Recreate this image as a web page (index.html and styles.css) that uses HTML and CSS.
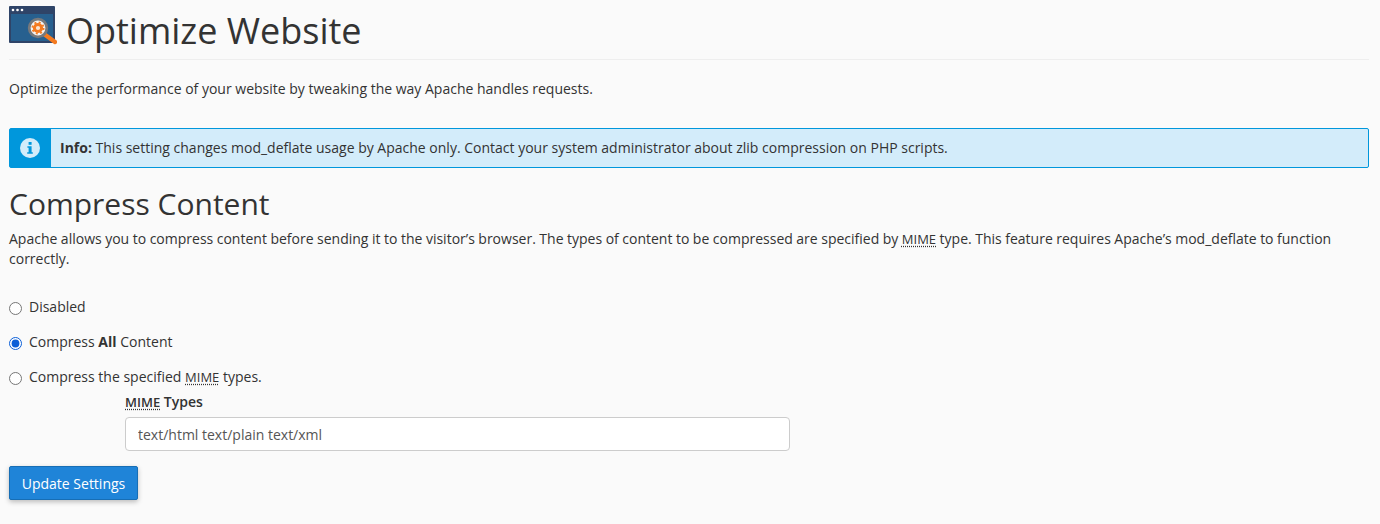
FILE: index.html
```html
<!DOCTYPE html>
<html lang="en">
<head>
    <meta charset="UTF-8">
    <title>Optimize Website</title>
    <link rel="stylesheet" href="styles.css">
</head>
<body>
    <div class="page-header">
        <svg class="page-icon" width="48" height="39" viewBox="0 0 48 39">
            <rect x="0" y="0" width="46" height="37" rx="1" fill="#2f4468"/>
            <rect x="2" y="8" width="42" height="27" fill="#27608f"/>
            <circle cx="4" cy="4" r="1.3" fill="#fff"/>
            <circle cx="8.5" cy="4" r="1.3" fill="#fff"/>
            <circle cx="13" cy="4" r="1.3" fill="#fff"/>
            <line x1="35" y1="28" x2="46" y2="36" stroke="#f47a20" stroke-width="4.4" stroke-linecap="round"/>
            <circle cx="29" cy="22" r="8.8" fill="#f4f4f4" stroke="#77797c" stroke-width="2.8"/>
            <circle cx="29" cy="22" r="3.6" fill="#fbe3d0" stroke="#f47a20" stroke-width="3"/>
            <circle cx="29" cy="22" r="5.6" fill="none" stroke="#f47a20" stroke-width="1.8" stroke-dasharray="2 2.4"/>
        </svg>
        <h1>Optimize Website</h1>
    </div>

    <p class="intro">Optimize the performance of your website by tweaking the way Apache handles requests.</p>

    <div class="alert">
        <div class="alert-icon">
            <svg width="20" height="20" viewBox="0 0 20 20">
                <circle cx="10" cy="10" r="10" fill="#d3ecfa"/>
                <rect x="8.6" y="4" width="3" height="2.8" fill="#0097dc"/>
                <path d="M7.4 8.2h4.2v6h1.2v1.6H7.2v-1.6h1.4V9.8H7.4z" fill="#0097dc"/>
            </svg>
        </div>
        <div class="alert-text"><strong>Info:</strong> This setting changes mod_deflate usage by Apache only. Contact your system administrator about zlib compression on PHP scripts.</div>
    </div>

    <h2>Compress Content</h2>
    <p class="description">Apache allows you to compress content before sending it to the visitor’s browser. The types of content to be compressed are specified by <abbr>MIME</abbr> type. This feature requires Apache’s mod_deflate to function correctly.</p>

    <form>
        <label class="radio-row"><input type="radio" name="compress"> Disabled</label>
        <label class="radio-row"><input type="radio" name="compress" checked> <span>Compress <strong>All</strong> Content</span></label>
        <label class="radio-row"><input type="radio" name="compress"> <span>Compress the specified <abbr>MIME</abbr> types.</span></label>

        <div class="mime-group">
            <label class="mime-label" for="mime"><abbr>MIME</abbr> Types</label>
            <input class="mime-input" type="text" id="mime" value="text/html text/plain text/xml">
        </div>

        <button type="button" class="btn-primary">Update Settings</button>
    </form>
</body>
</html>
```

FILE: styles.css
```css
html, body {
    height: 100%;
}
body {
    margin: 0;
    padding: 0 11px 0 9px;
    background-color: #fafafa;
    color: #333;
    font-family: "Open Sans", sans-serif;
    font-size: 14px;
    line-height: 20px;
    box-sizing: border-box;
    overflow: hidden;
}
.page-header {
    display: flex;
    align-items: flex-start;
    height: 59px;
    border-bottom: 1px solid #eee;
}
.page-icon {
    margin-top: 6px;
    margin-right: 9px;
}
h1 {
    margin: 9px 0 0;
    font-size: 36px;
    font-weight: 400;
    line-height: 44px;
}
.intro {
    margin: 19px 0 0;
}
.alert {
    display: flex;
    margin-top: 29px;
    height: 40px;
    box-sizing: border-box;
    border: 1px solid #0097dc;
    border-radius: 2px;
    background-color: #d3ecfa;
}
.alert-icon {
    display: flex;
    align-items: center;
    justify-content: center;
    width: 41px;
    padding-right: 2px;
    box-sizing: border-box;
    background-color: #0097dc;
}
.alert-text {
    padding: 9px 0 0 9px;
}
h2 {
    margin: 16px 0 0;
    font-size: 30px;
    font-weight: 400;
    line-height: 40px;
}
.description {
    margin: 5px 0 0;
    word-spacing: -0.12px;
}
abbr {
    font-size: 13px;
    text-decoration: underline dotted;
    text-underline-offset: 2px;
}
form {
    margin-top: 28px;
}
.radio-row {
    display: flex;
    align-items: center;
    height: 20px;
    margin-bottom: 15px;
}
.radio-row input {
    margin: 3px 7px 0 0;
    width: 13px;
    height: 13px;
    accent-color: #0b5ed7;
}
.mime-group {
    margin: -10px 0 0 116px;
}
.mime-label {
    display: block;
    font-weight: 600;
    margin-bottom: 5px;
}
.mime-input {
    display: block;
    width: 665px;
    height: 34px;
    padding: 6px 12px;
    box-sizing: border-box;
    border: 1px solid #ccc;
    border-radius: 4px;
    background-color: #fff;
    color: #555;
    font-family: "Open Sans", sans-serif;
    font-size: 14px;
}
.btn-primary {
    display: block;
    margin-top: 15px;
    width: 129px;
    height: 34px;
    padding: 0;
    border: 1px solid #176eb5;
    border-radius: 2px;
    background-color: #1f84d8;
    color: #fff;
    font-family: "Open Sans", sans-serif;
    font-size: 14px;
    font-weight: 400;
    box-shadow: 0 2px 5px rgba(0, 0, 0, 0.25);
}
```
